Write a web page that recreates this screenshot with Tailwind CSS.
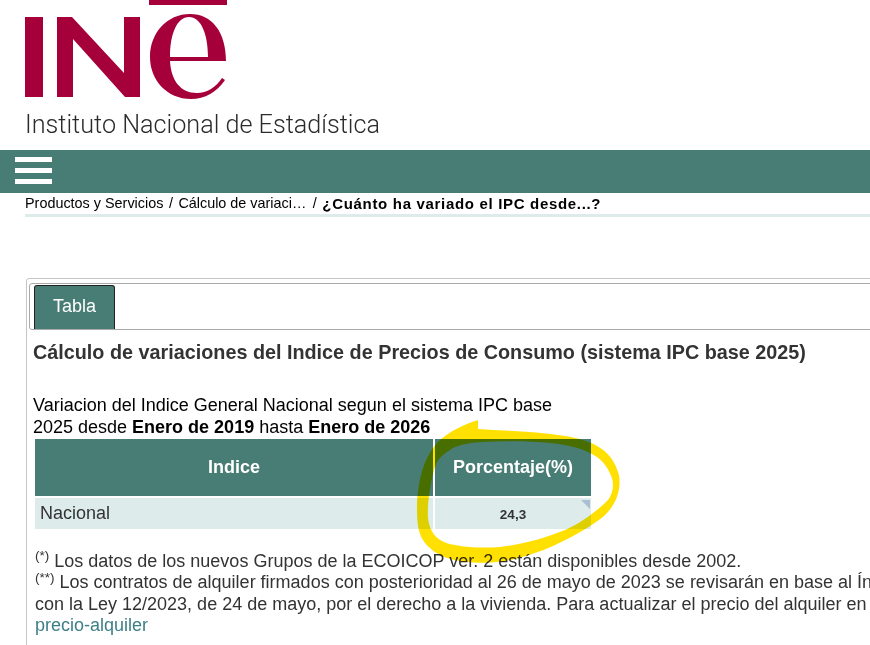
<!DOCTYPE html>
<html lang="es">
<head>
<meta charset="UTF-8">
<script src="https://cdn.jsdelivr.net/npm/@tailwindcss/browser@4"></script>
<title>INE</title>
</head>
<body class="relative w-[870px] h-[645px] overflow-hidden bg-white font-['Liberation_Sans',sans-serif] text-[#333]">
  <!-- logo -->
  <header class="h-[150px] pl-[25px]">
    <svg width="210" height="100" viewBox="25 0 210 100" class="block" fill="#a6003b">
      <rect x="25" y="17" width="18" height="80"/>
      <path d="M57 17h15l52 56V17h16v80h-15L73 39v58H57z"/>
      <rect x="149" y="0" width="78" height="5"/>
      <path fill-rule="evenodd" d="M226 61H170C171 80 180 93 197 93C207 93 216 87 222 78L225 80C217 92 205 99 191 99C167 99 150 80 150 57C150 33 167 14 190 14C212 14 226 32 226 61ZM170 57H208C208 34 201 17 189 17C177 17 170 34 170 57Z"/>
    </svg>
    <div class="mt-[11px] text-[25.2px] leading-[28px] font-light font-['Roboto',sans-serif] text-[#2b2b2b] whitespace-nowrap">Instituto Nacional de Estadística</div>
  </header>

  <!-- barra menu -->
  <nav class="h-[43px] bg-[#487d75] pl-[15px] pt-[7px] flex flex-col gap-[6px]">
    <span class="block w-[37px] h-[5px] bg-white"></span>
    <span class="block w-[37px] h-[5px] bg-white"></span>
    <span class="block w-[37px] h-[5px] bg-white"></span>
  </nav>

  <div class="ml-[25px] h-[24px] pt-[1px] border-b-[3px] border-[#ddecea] flex items-center gap-[5.5px] text-[14.4px] text-black whitespace-nowrap">
    <span>Productos y Servicios</span>
    <span>/</span>
    <span>Cálculo de variaci…</span>
    <span class="ml-[1px]">/</span>
    <span class="font-bold tracking-[0.68px] text-[15px]">¿Cuánto ha variado el IPC desde...?</span>
  </div>

  <!-- panel -->
  <main class="mt-[61px] ml-[26px] w-[900px] h-[400px] border border-[#c5c5c5] rounded-[3px] pl-[2px] pt-[4px]">
    <div class="h-[47px] border border-[#aaa] rounded-[3px] pl-[4px] pt-[1px] flex items-end">
      <div class="w-[81px] h-[44px] bg-[#487d75] border border-b-0 border-[#222] rounded-t-[3px] flex items-center justify-center pb-[3px] text-white text-[18px]">Tabla</div>
    </div>
    <h1 class="ml-[4px] mt-[10px] text-[19.8px] leading-[24px] font-bold">Cálculo de variaciones del Indice de Precios de Consumo (sistema IPC base 2025)</h1>
    <p class="ml-[4px] mt-[30px] text-[18px] leading-[22px] text-black">Variacion del Indice General Nacional segun el sistema IPC base<br>2025 desde <b>Enero de 2019</b> hasta <b>Enero de 2026</b></p>

    <div class="ml-[6px] mt-[1px] w-[556px] grid grid-cols-[398px_156px] gap-[2px]">
      <div class="h-[57px] bg-[#487d75] text-white font-bold text-[18px] flex items-center justify-center">Indice</div>
      <div class="h-[57px] bg-[#487d75] text-white font-bold text-[18px] flex items-center justify-center">Porcentaje(%)</div>
      <div class="h-[31px] bg-[#ddecea] text-[18px] pl-[5px] flex items-center">Nacional</div>
      <div class="relative h-[31px] bg-[#ddecea] text-[13.5px] font-bold flex items-center justify-center pt-[3px]">24,3
        <span class="absolute top-[2px] right-[1px] w-0 h-0 border-t-[9px] border-l-[9px] border-t-[#a9bdd3] border-l-transparent"></span>
      </div>
    </div>

    <div class="ml-[6px] mt-[22px] text-[18px] leading-[21.3px] whitespace-nowrap">
      <div><sup class="text-[13.5px]">(*)</sup> Los datos de los nuevos Grupos de la ECOICOP ver. 2 están disponibles desde 2002.</div>
      <div><sup class="text-[13.5px]">(**)</sup> Los contratos de alquiler firmados con posterioridad al 26 de mayo de 2023 se revisarán en base al Índice de Referencia</div>
      <div>con la Ley 12/2023, de 24 de mayo, por el derecho a la vivienda. Para actualizar el precio del alquiler en www.ine.es</div>
      <a href="#" class="text-[#3c7f86]">precio-alquiler</a>
    </div>
  </main>

  <!-- rotulador amarillo -->
  <svg class="absolute inset-0 mix-blend-multiply pointer-events-none" width="870" height="645" viewBox="0 0 870 645" fill="#ffe000">
    <path fill-rule="evenodd" d="M478 420L478 429C505 431 535 431 565 436C590 440 612 448 619 475C622 495 612 512 596 522C570 540 535 556 505 561C480 565 445 563 430 548C418 538 417 525 417 505C418 480 424 455 440 440C450 431 465 424 478 420ZM483 442C465 443 455 446 450 450C440 456 436 462 434 470C430 485 427 505 428 518C430 535 440 543 455 545C470 548 485 548 500 547C525 544 545 538 565 530C585 521 600 508 608 500C613 493 614 485 612 478C608 468 604 462 597 457C585 449 570 445 550 443C530 441 505 441 483 442Z"/>
  </svg>
</body>
</html>
